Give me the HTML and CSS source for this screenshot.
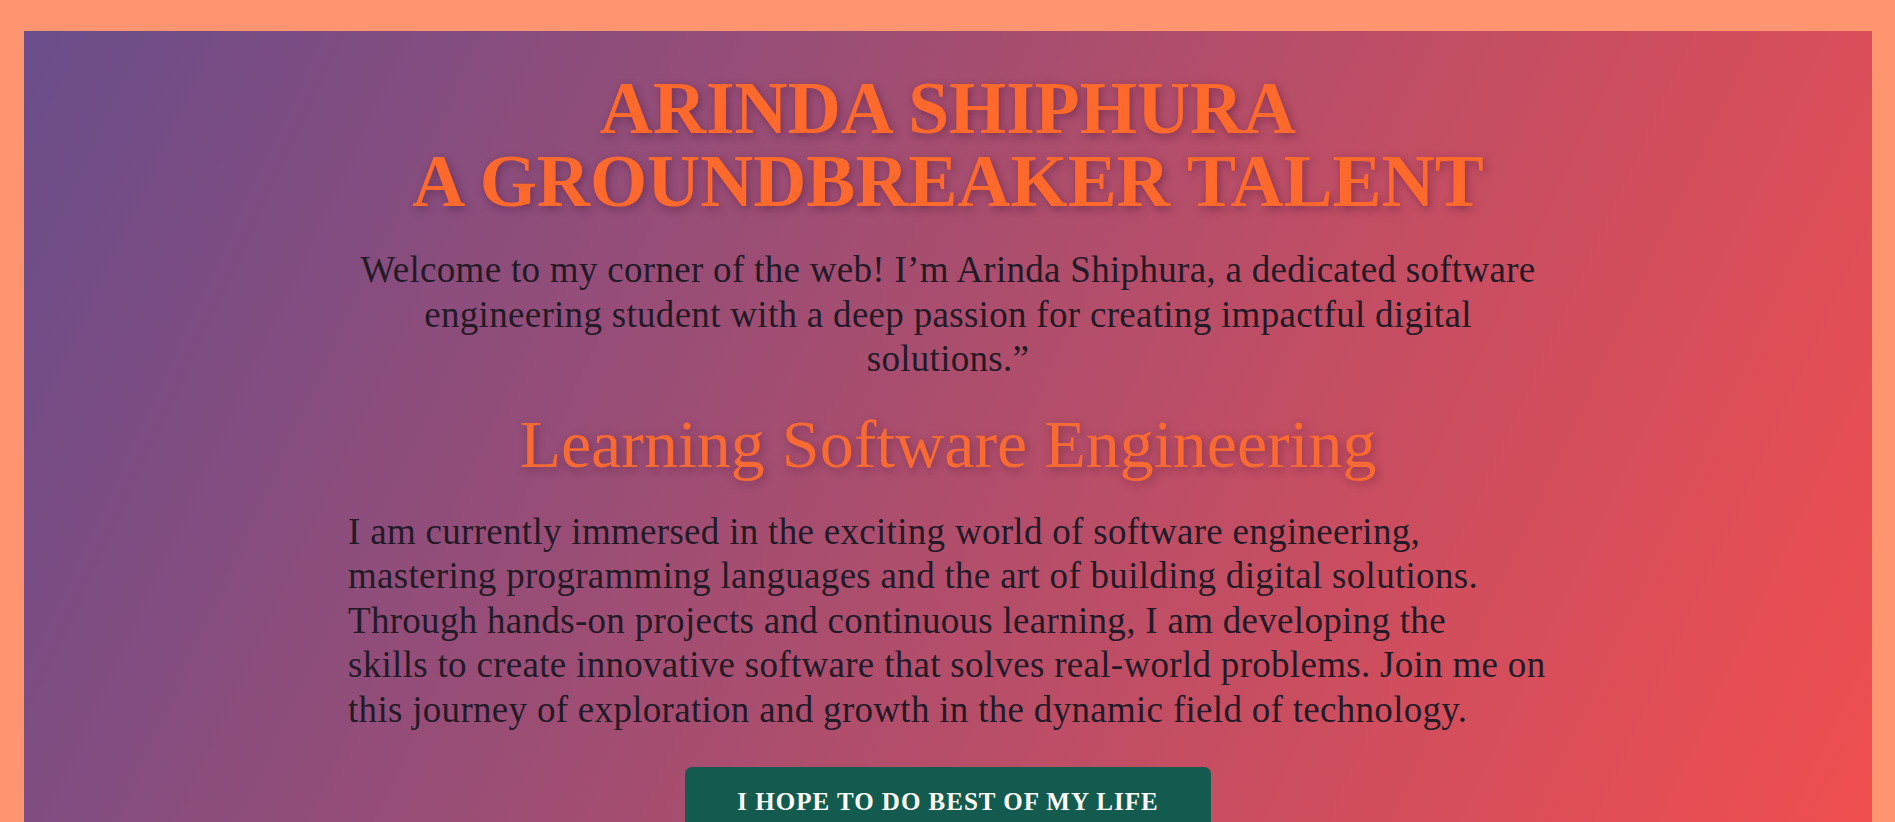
FILE: index.html
```html
<!DOCTYPE html>
<html lang="en">
<head>
<meta charset="utf-8">
<title>Arinda Shiphura</title>
<link rel="stylesheet" href="styles.css">
</head>
<body>
  <main class="hero">
    <div class="content">
      <h1 class="title">ARINDA SHIPHURA<br>A GROUNDBREAKER TALENT</h1>
      <p class="intro">Welcome to my corner of the web! I’m Arinda Shiphura, a dedicated software<br>engineering student with a deep passion for creating impactful digital<br>solutions.”</p>
      <h2 class="subtitle">Learning Software Engineering</h2>
      <p class="story">I am currently immersed in the exciting world of software engineering,<br>mastering programming languages and the art of building digital solutions.<br>Through hands-on projects and continuous learning, I am developing the<br>skills to create innovative software that solves real-world problems. Join me on<br>this journey of exploration and growth in the dynamic field of technology.</p>
      <div class="actions">
        <a class="btn" href="#">I HOPE TO DO BEST OF MY LIFE</a>
      </div>
    </div>
  </main>
</body>
</html>
```

FILE: styles.css
```css
html, body {
  margin: 0;
  padding: 0;
}

body {
  background: #ff9470;
  padding: 31px 23px 0 24px;
  font-family: "Liberation Serif", "Times New Roman", serif;
}

.hero {
  background: linear-gradient(115deg, #6a4d8b 0%, #f24e4e 100%);
  padding: 41px 0 40px;
}

.content {
  max-width: 1200px;
  margin: 0 auto;
}

.title {
  margin: 0;
  text-align: center;
  font-size: 73.5px;
  line-height: 73px;
  font-weight: 700;
  color: #ff6a2c;
  text-shadow: 2px 3px 8px rgba(70, 20, 50, 0.45);
}

.intro {
  margin: 30px 0 0;
  text-align: center;
  font-size: 37px;
  line-height: 44.5px;
  letter-spacing: 0.3px;
  white-space: nowrap;
  color: #231a27;
}

.subtitle {
  margin: 22px 0 0;
  text-align: center;
  font-size: 68px;
  line-height: 80px;
  font-weight: 400;
  color: #f86a32;
  text-shadow: 2px 3px 8px rgba(70, 20, 50, 0.4);
}

.story {
  margin: 26px 0 0;
  text-align: left;
  font-size: 37px;
  line-height: 44.5px;
  letter-spacing: 0.3px;
  white-space: nowrap;
  color: #231a27;
}

.actions {
  margin-top: 35px;
  display: flex;
  justify-content: center;
}

.btn {
  display: inline-block;
  background: #135b4f;
  color: #ffffff;
  text-decoration: none;
  font-weight: 700;
  font-size: 25px;
  line-height: 30px;
  letter-spacing: 1px;
  padding: 20px 52px;
  border-radius: 7px;
}
```
